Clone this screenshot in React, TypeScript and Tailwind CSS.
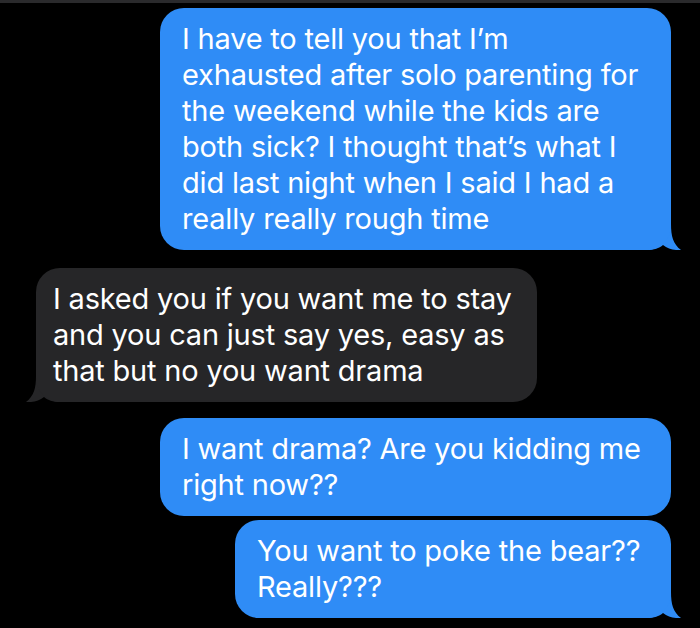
import React from "react";

type Side = "me" | "them";

function Tail({ side, color }: { side: Side; color: string }) {
  if (side === "me") {
    return (
      <svg
        className="absolute bottom-0 -right-[10px] w-[34px] h-[26px]"
        viewBox="0 0 34 26"
        fill={color}
      >
        <path d="M0 0 L24 0 C24 12 26 20 34 26 C27 26.5 21 25 16 21 C12 24.5 7 26 0 26 Z" />
      </svg>
    );
  }
  return (
    <svg
      className="absolute bottom-0 -left-[10px] w-[34px] h-[26px]"
      viewBox="0 0 34 26"
      fill={color}
    >
      <path d="M34 0 L10 0 C10 12 8 20 0 26 C7 26.5 13 25 18 21 C22 24.5 27 26 34 26 Z" />
    </svg>
  );
}

function Bubble({
  side,
  lines,
  width,
  tail,
}: {
  side: Side;
  lines: string[];
  width: string;
  tail?: boolean;
}) {
  const me = side === "me";
  const color = me ? "#2f8cf6" : "#262628";
  return (
    <div className={`relative ${width} ${me ? "self-end" : "self-start"}`}>
      <div
        className={`relative z-10 rounded-[24px] py-[13px] text-white text-[29px] leading-[36px] tracking-[-0.2px] whitespace-nowrap ${
          me ? "bg-[#2f8cf6] px-[22px]" : "bg-[#262628] px-[17px]"
        }`}
      >
        {lines.map((l, i) => (
          <div key={i}>{l}</div>
        ))}
      </div>
      {tail && <Tail side={side} color={color} />}
    </div>
  );
}

export default function App() {
  return (
    <main className="w-[700px] h-[628px] bg-black overflow-hidden font-['Inter',sans-serif]">
      <div className="h-[3px] bg-[#2a2a2c]" />
      <div className="flex flex-col pt-[5px] pr-[29px] pl-[36px]">
        <Bubble
          side="me"
          width="w-[511px]"
          tail
          lines={[
            "I have to tell you that I\u2019m",
            "exhausted after solo parenting for",
            "the weekend while the kids are",
            "both sick? I thought that\u2019s what I",
            "did last night when I said I had a",
            "really really rough time",
          ]}
        />
        <div className="h-[18px]" />
        <Bubble
          side="them"
          width="w-[501px]"
          tail
          lines={[
            "I asked you if you want me to stay",
            "and you can just say yes, easy as",
            "that but no you want drama",
          ]}
        />
        <div className="h-[16px]" />
        <Bubble
          side="me"
          width="w-[511px]"
          lines={["I want drama? Are you kidding me", "right now??"]}
        />
        <div className="h-[4px]" />
        <Bubble
          side="me"
          width="w-[436px]"
          tail
          lines={["You want to poke the bear??", "Really???"]}
        />
      </div>
    </main>
  );
}
